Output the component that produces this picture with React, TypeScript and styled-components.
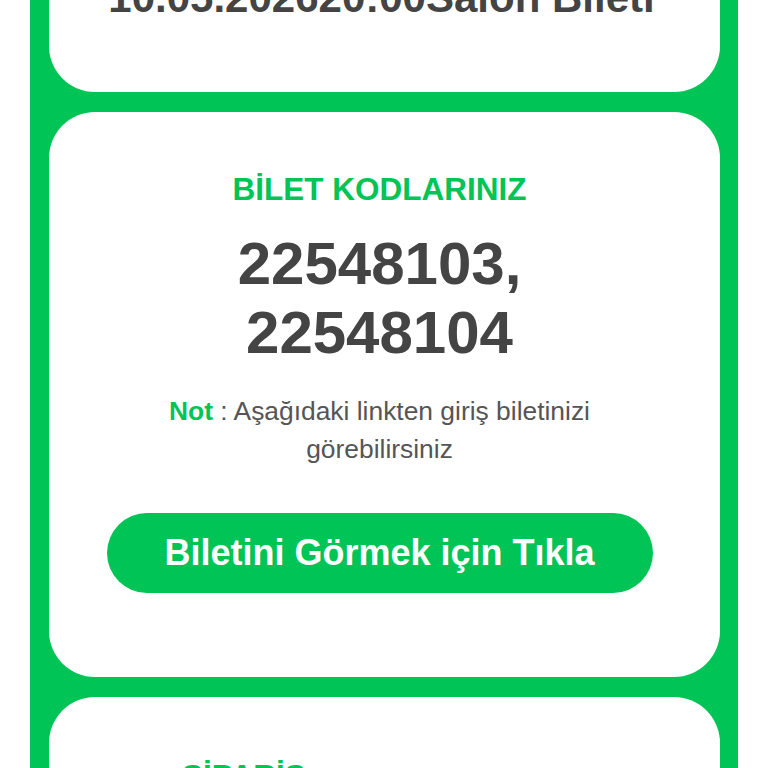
import React from 'react';
import styled, { createGlobalStyle } from 'styled-components';

const GlobalStyle = createGlobalStyle`
  html, body {
    margin: 0;
    padding: 0;
    background: #ffffff;
    overflow: hidden;
  }
  body {
    font-family: "Liberation Sans", Arial, Helvetica, sans-serif;
  }
`;

const GREEN = '#00c455';

const Page = styled.div`
  height: 768px;
  overflow: hidden;
  padding: 0 30px;
`;

const Frame = styled.div`
  margin-top: -88px;
  background: ${GREEN};
  padding: 19px 18px 19px 19px;
  display: flex;
  flex-direction: column;
  gap: 20px;
`;

const Card = styled.section<{ $pad: string }>`
  background: #ffffff;
  border-radius: 46px;
  padding: ${({ $pad }) => $pad};
  display: flex;
  flex-direction: column;
  align-items: center;
  text-align: center;
`;

const EventTitle = styled.h2`
  margin: 0;
  font-size: 42px;
  line-height: 54px;
  font-weight: 700;
  color: #444444;
  white-space: nowrap;
`;

const SectionLabel = styled.h3<{ $align?: string }>`
  margin: 0;
  font-size: 31.5px;
  line-height: 37px;
  font-weight: 700;
  color: ${GREEN};
  align-self: ${({ $align }) => $align || 'center'};
`;

const Codes = styled.div`
  margin-top: 21px;
  font-size: 60px;
  line-height: 69px;
  font-weight: 700;
  color: #444444;
`;

const Note = styled.p`
  margin: 25px 0 0;
  font-size: 26.4px;
  line-height: 38px;
  color: #555555;
  max-width: 470px;

  strong {
    color: ${GREEN};
    font-weight: 700;
  }
`;

const TicketButton = styled.button`
  margin-top: 45px;
  width: 546px;
  height: 80px;
  border: none;
  border-radius: 40px;
  background: ${GREEN};
  color: #ffffff;
  font-family: inherit;
  font-size: 36px;
  font-weight: 700;
  cursor: pointer;
`;

export default function App() {
  return (
    <>
      <GlobalStyle />
      <Page>
        <Frame>
          <Card $pad="40px 26px 67px 20px">
            <EventTitle>10.05.202620:00Salon Bileti</EventTitle>
          </Card>

          <Card $pad="59px 30px 84px 20px">
            <SectionLabel>BİLET KODLARINIZ</SectionLabel>
            <Codes>
              22548103,
              <br />
              22548104
            </Codes>
            <Note>
              <strong>Not</strong> : Aşağıdaki linkten giriş biletinizi görebilirsiniz
            </Note>
            <TicketButton>Biletini Görmek için Tıkla</TicketButton>
          </Card>

          <Card $pad="61px 40px 60px 133px">
            <SectionLabel $align="flex-start">SİPARİŞ</SectionLabel>
          </Card>
        </Frame>
      </Page>
    </>
  );
}
